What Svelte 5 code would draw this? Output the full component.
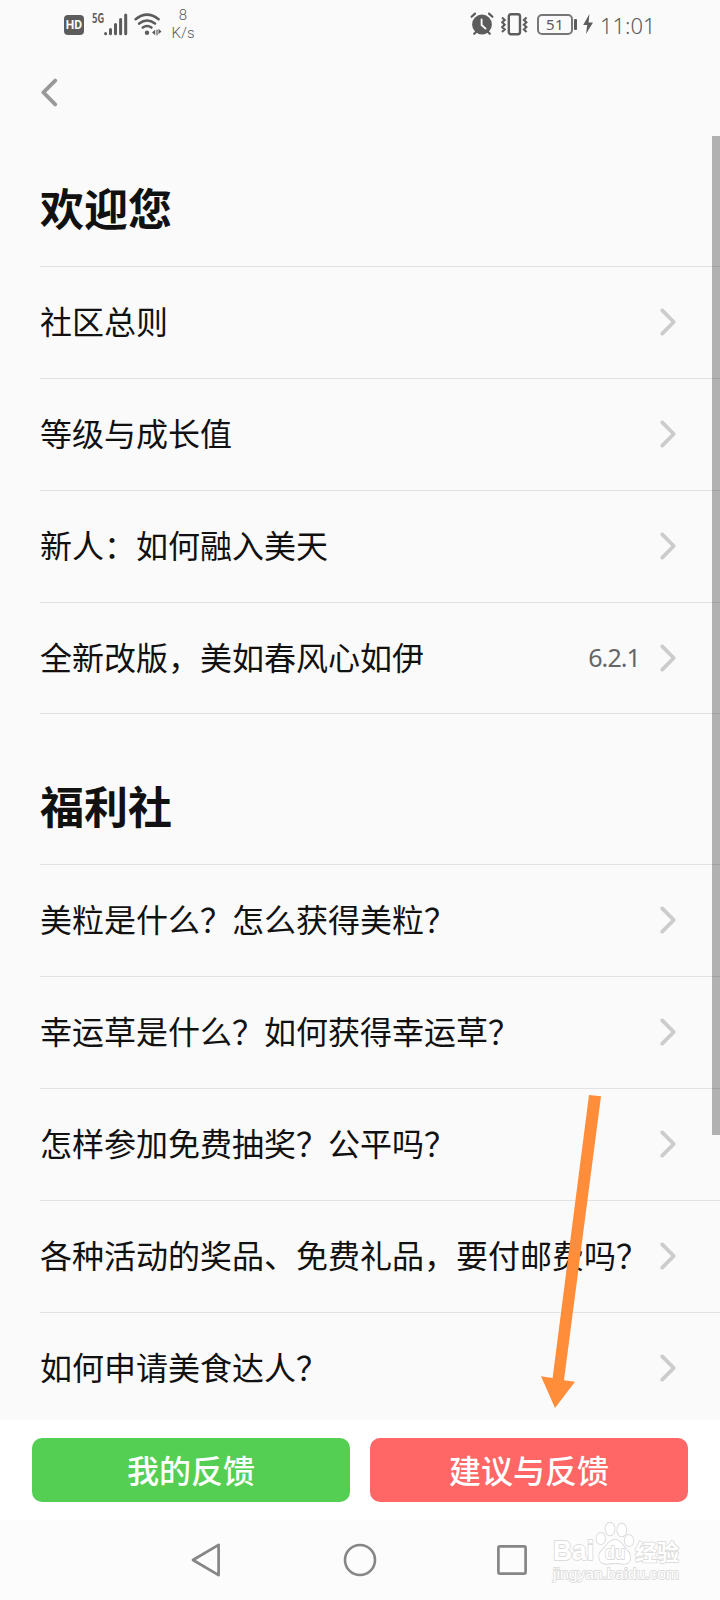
<script>
  const sections = [
    {
      title: '欢迎您',
      items: [
        { label: '社区总则' },
        { label: '等级与成长值' },
        { label: '新人：如何融入美天' },
        { label: '全新改版，美如春风心如伊', note: '6.2.1' }
      ]
    },
    {
      title: '福利社',
      items: [
        { label: '美粒是什么？怎么获得美粒？' },
        { label: '幸运草是什么？如何获得幸运草？' },
        { label: '怎样参加免费抽奖？公平吗？' },
        { label: '各种活动的奖品、免费礼品，要付邮费吗？' },
        { label: '如何申请美食达人？' }
      ]
    }
  ];
</script>

<div class="screen">
  <header class="status">
    <div class="hd">HD</div>
    <div class="net">5G</div>
    <svg class="signal" width="24" height="23" viewBox="0 0 24 23" stroke="#5c5c5c" stroke-width="3" stroke-linecap="round">
      <path d="M1.6 20.6v.2M6.5 16.6v4.2M11.5 11.6v9.2M16.6 6.6v14.2M21.7 2v18.8" />
    </svg>
    <svg class="wifi" width="29" height="23" viewBox="0 0 29 23" fill="none" stroke="#5c5c5c" stroke-width="2.5" stroke-linecap="round">
      <path d="M1.6 6.2Q13 -3 24.6 6.2M5.2 10.6Q13 4.4 21 10.6M8.8 14.6Q13 11.4 17.4 14.6" />
      <circle cx="13" cy="19.8" r="2.2" fill="#5c5c5c" stroke="none" />
      <path d="M18 19.5l3.2-2.7v5.4zM22.4 16.8h1.2v5.4h-1.2zM27.5 18.5l-3-2.7v5.4z" fill="#5c5c5c" stroke="none" />
    </svg>
    <div class="speed"><span>8</span><span>K/s</span></div>
    <div class="spring"></div>
    <svg class="alarm" width="24" height="24" viewBox="0 0 24 24" fill="none" stroke="#5c5c5c" stroke-linecap="round">
      <circle cx="12" cy="12.5" r="9.9" fill="#5c5c5c" stroke="none" />
      <path d="M1.6 4.8L5 1.6M22.4 4.8L19 1.6M4.2 21.8l2-2M19.8 21.8l-2-2" stroke-width="2.2" />
      <path d="M11.6 7.4v5.6l4 3.6" stroke="#fafafa" stroke-width="1.9" />
    </svg>
    <svg class="vibrate" width="27" height="23" viewBox="0 0 27 23" fill="none" stroke="#5c5c5c">
      <rect x="7.8" y="1.3" width="11.2" height="20" rx="2.2" stroke-width="2.4" />
      <path d="M1 4.4l2.7 2.5L1.2 9.3l2.5 2.4-2.5 2.4 2.5 2.4L1 19M25.6 4.4l-2.7 2.5 2.5 2.4-2.5 2.4 2.5 2.4-2.5 2.4 2.7 2.5" stroke-width="2.1" />
    </svg>
    <div class="battery">51</div>
    <div class="nub"></div>
    <svg class="bolt" width="10" height="20" viewBox="0 0 10 20" fill="#5c5c5c"><path d="M6.4 0L.2 11h4L3 20l7-11.600H5.600z" /></svg>
    <time>11:01</time>
  </header>

  <nav class="top">
    <svg width="18" height="30" viewBox="0 0 18 30" fill="none" stroke="#999" stroke-width="3.8" stroke-linecap="round" stroke-linejoin="round">
      <path d="M15.2 3.600L3.400 15.400l11.800 12" />
    </svg>
  </nav>

  <main>
    {#each sections as section}
      <section>
        <h2>{section.title}</h2>
        <ul>
          {#each section.items as item}
            <li>
              <span class="label">{item.label}</span>
              {#if item.note}<span class="note">{item.note}</span>{/if}
              <svg width="18" height="30" viewBox="0 0 18 30" fill="none" stroke="#ccc" stroke-width="3.8" stroke-linecap="round" stroke-linejoin="round">
                <path d="M3.2 3.400l11.600 11.600L3.200 26.600" />
              </svg>
            </li>
          {/each}
        </ul>
      </section>
    {/each}
  </main>

  <footer>
    <button class="mine">我的反馈</button>
    <button class="suggest">建议与反馈</button>
  </footer>

  <div class="system">
    <svg width="30" height="34" viewBox="0 0 30 34" fill="none" stroke="#868686" stroke-width="2.7" stroke-linejoin="round"><path d="M27.600 1.800v30.400L2 17z" /></svg>
    <svg width="34" height="34" viewBox="0 0 34 34" fill="none" stroke="#868686" stroke-width="2.6"><circle cx="17" cy="17" r="15" /></svg>
    <svg class="square" width="30" height="30" viewBox="0 0 30 30" fill="none" stroke="#868686" stroke-width="2.7"><rect x="1.4" y="1.4" width="27.2" height="27.2" rx="1.5" /></svg>
  </div>

  <div class="scrollbar"></div>

  <svg class="arrow" width="70" height="320" viewBox="0 0 70 320" fill="#ff8d3a">
    <path d="M49 5L61 6.200L24 290.200L35 291.800L15 318L1 286.200L12.600 288z" />
  </svg>

  <svg class="mark" width="150" height="80" viewBox="0 0 150 80" fill="#fff" stroke="#dcdcdc" stroke-width="1.8" paint-order="stroke" stroke-linejoin="round">
    <text x="3" y="40" font-size="28" font-weight="700" textLength="41" lengthAdjust="spacingAndGlyphs">Bai</text>
    <g stroke-width="2">
      <ellipse cx="50.800" cy="18.500" rx="4.200" ry="5.600" />
      <ellipse cx="60" cy="9" rx="4.400" ry="6.200" />
      <ellipse cx="71.800" cy="10" rx="4.400" ry="6.200" />
      <ellipse cx="79" cy="20.500" rx="4.200" ry="5.600" />
      <path d="M65 20c-5 0-7 4-10 7.500c-4 4-6.500 6-5.500 11c1 5 5 5.500 9 5c4-.6 9-.6 13 0c4 .6 8 0 8.500-5c.5-5-2-7-5.500-11C71.500 24 70 20 65 20z" />
    </g>
    <text x="55" y="38.500" font-size="18" font-weight="700" textLength="20" lengthAdjust="spacingAndGlyphs">du</text>
    <text class="cn" x="85" y="39.500" font-size="22" font-weight="700">经验</text>
    <text x="3" y="59" font-size="15.500" font-weight="400" textLength="126" lengthAdjust="spacingAndGlyphs">jingyan.baidu.com</text>
  </svg>
</div>

<style>
  :global(body) {
    background: #fafafa;
  }
  .screen {
    position: relative;
    width: 720px;
    height: 1600px;
    overflow: hidden;
    display: flex;
    flex-direction: column;
    background: #fafafa;
    color: #111;
    font-family: "Noto Sans CJK SC", sans-serif;
  }
  .status {
    height: 48px;
    flex: none;
    display: flex;
    align-items: center;
    padding: 0 64px 0 64px;
    color: #5c5c5c;
    box-sizing: border-box;
  }
  .status > * {
    flex: none;
  }
  .hd {
    width: 20px;
    height: 20px;
    margin-top: 2px;
    border-radius: 4px;
    background: #5c5c5c;
    color: #fafafa;
    font: 700 12px/21px Roboto, sans-serif;
    text-align: center;
  }
  .net {
    width: 12px;
    margin: -13px 0 0 8px;
    font: 700 13px/12px "Noto Sans CJK SC", sans-serif;
    transform: scaleX(0.72);
    transform-origin: left;
  }
  .wifi {
    margin-left: 6px;
  }
  .speed {
    display: flex;
    flex-direction: column;
    width: 26px;
    margin-left: 7px;
    text-align: center;
    font: 300 15px/18px Roboto, sans-serif;
    color: #5c5c5c;
  }
  .status .spring {
    flex: 1;
  }
  .vibrate {
    margin-left: 7px;
  }
  .battery {
    width: 36px;
    height: 21px;
    margin: 0 0 0 9px;
    box-sizing: border-box;
    border: 2px solid #777;
    border-radius: 5px;
    font: 400 15px/16px "Noto Sans", sans-serif;
    letter-spacing: 0.500px;
    text-align: center;
  }
  .nub {
    width: 3px;
    height: 11px;
    margin: 1px 0 0 1px;
    border-radius: 1px;
    background: #5c5c5c;
  }
  .bolt {
    margin-left: 6px;
  }
  time {
    width: 56px;
    margin: 2px 0 0 7px;
    font: 300 22px/30px "Noto Sans", sans-serif;
    white-space: nowrap;
    color: #5c5c5c;
  }
  .top {
    height: 68px;
    flex: none;
    padding: 29px 0 0 40px;
    box-sizing: border-box;
  }
  .top svg,
  li svg {
    display: block;
  }
  main {
    height: 1304px;
    flex: none;
    overflow: hidden;
    padding-left: 40px;
  }
  h2 {
    margin: 0;
    height: 150px;
    padding-top: 34px;
    box-sizing: border-box;
    font-size: 44px;
    font-weight: 700;
    line-height: 114px;
  }
  ul {
    margin: 0;
    padding: 0;
    list-style: none;
  }
  li {
    height: 112px;
    box-sizing: border-box;
    display: flex;
    align-items: center;
    padding: 0 43px 2px 0;
    border-top: 1px solid #e2e2e2;
  }
  section:first-child li:last-child {
    border-bottom: 1px solid #e2e2e2;
    padding-bottom: 1px;
  }
  .label {
    flex: 1;
    padding-bottom: 4px;
    font-size: 32px;
    line-height: 48px;
    white-space: nowrap;
  }
  .note {
    margin: -2px 19px 0 0;
    font: 400 25px/30px "Noto Sans", sans-serif;
    letter-spacing: -0.900px;
    color: #666;
  }
  footer {
    height: 100px;
    flex: none;
    display: flex;
    gap: 20px;
    padding: 18px 32px;
    box-sizing: border-box;
    background: #fff;
  }
  button {
    flex: 1;
    border: 0;
    padding: 0 0 3px;
    border-radius: 10px;
    color: #fff;
    font: 500 32px/60px "KaiTi", "STKaiti", "AR PL UKai CN", "Noto Sans CJK SC", sans-serif;
  }
  .mine {
    background: #54cf54;
  }
  .suggest {
    background: #ff6767;
  }
  .system {
    height: 80px;
    display: flex;
    align-items: center;
    padding-left: 191px;
    gap: 122px;
    background: #fcfcfc;
  }
  .square {
    margin-left: -2px;
  }
  .scrollbar {
    position: absolute;
    right: 0;
    top: 136px;
    width: 8px;
    height: 999px;
    background: rgba(0, 0, 0, 0.29);
  }
  .arrow {
    position: absolute;
    left: 540px;
    top: 1090px;
  }
  .mark {
    position: absolute;
    left: 550px;
    top: 1520px;
    font-family: "Liberation Sans", sans-serif;
  }
  .cn {
    font-family: "Noto Sans CJK SC", sans-serif;
  }
</style>
